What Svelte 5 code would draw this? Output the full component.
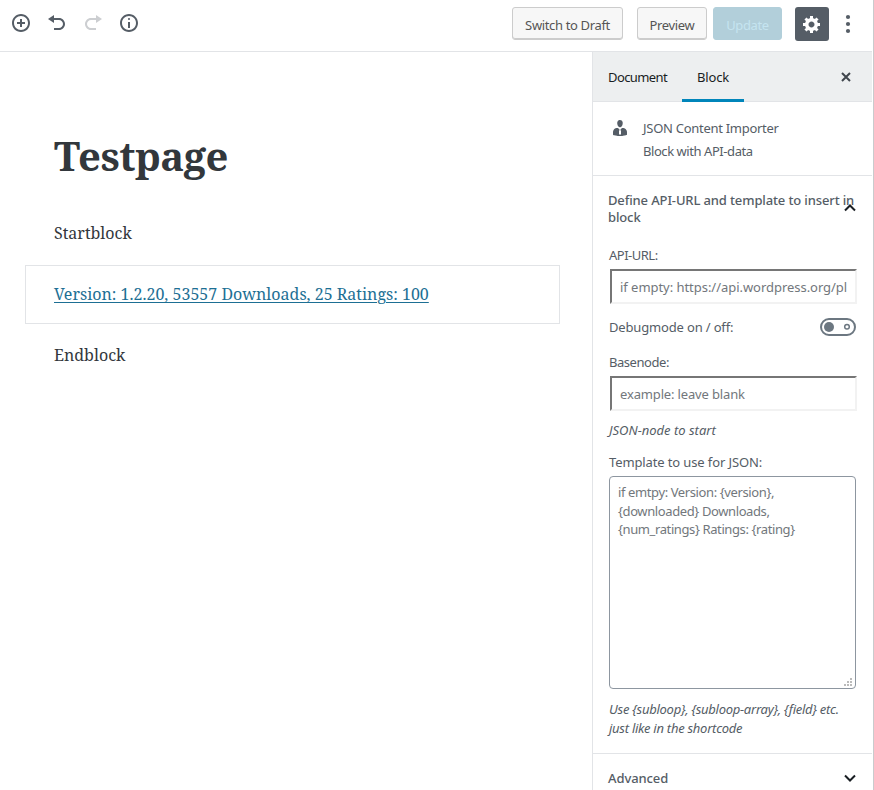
<script>
  let apiUrl = $state('');
  let baseNode = $state('');
  let template = $state('');
</script>

<div class="editor">
  <header>
    <div class="tools">
      <button class="tool" aria-label="Add block"><svg viewBox="0 0 20 20"><path d="M10 1c-5 0-9 4-9 9s4 9 9 9 9-4 9-9-4-9-9-9zm0 16c-3.9 0-7-3.1-7-7s3.1-7 7-7 7 3.1 7 7-3.1 7-7 7zM11 6H9v3H6v2h3v3h2v-3h3V9h-3V6z" /></svg></button>
      <button class="tool" aria-label="Undo"><svg viewBox="0 0 20 20"><path d="M12 5H7V2L1 6l6 4V7h5c2.2 0 4 1.8 4 4s-1.8 4-4 4H7v2h5c3.3 0 6-2.7 6-6s-2.7-6-6-6z" /></svg></button>
      <button class="tool dim" aria-label="Redo"><svg viewBox="0 0 20 20"><path d="M8 5h5V2l6 4-6 4V7H8c-2.2 0-4 1.8-4 4s1.8 4 4 4h5v2H8c-3.3 0-6-2.7-6-6s2.7-6 6-6z" /></svg></button>
      <button class="tool" aria-label="Content structure"><svg viewBox="0 0 20 20"><path d="M9 15h2V9H9v6zm1-10c-.5 0-1 .5-1 1s.5 1 1 1 1-.5 1-1-.5-1-1-1zm0-4c-5 0-9 4-9 9s4 9 9 9 9-4 9-9-4-9-9-9zm0 16c-3.9 0-7-3.1-7-7s3.1-7 7-7 7 3.1 7 7-3.1 7-7 7z" /></svg></button>
    </div>
    <div class="actions">
      <button class="btn draft">Switch to Draft</button>
      <button class="btn preview">Preview</button>
      <button class="btn update">Update</button>
      <button class="gear" aria-label="Settings"><svg viewBox="0 0 20 20"><path d="M18 12h-2.18c-.17.7-.44 1.35-.81 1.93l1.54 1.54-2.1 2.1-1.54-1.54c-.58.36-1.23.63-1.91.79V19H8v-2.18c-.68-.16-1.33-.43-1.91-.79l-1.54 1.54-2.12-2.12 1.54-1.54c-.36-.58-.63-1.23-.79-1.91H1V9.03h2.17c.16-.7.44-1.35.8-1.94L2.43 5.55l2.1-2.1 1.54 1.54c.58-.37 1.24-.64 1.93-.81V2h3v2.18c.68.16 1.33.43 1.91.79l1.54-1.54 2.12 2.12-1.54 1.54c.36.59.64 1.24.8 1.94H18V12zm-8.5 1.5c1.66 0 3-1.34 3-3s-1.34-3-3-3-3 1.34-3 3 1.34 3 3 3z" /></svg></button>
      <button class="more" aria-label="More"><svg viewBox="0 0 8 20"><circle cx="4" cy="3" r="2.1" /><circle cx="4" cy="10" r="2.1" /><circle cx="4" cy="17" r="2.1" /></svg></button>
    </div>
  </header>

  <div class="body">
    <main>
      <h1>Testpage</h1>
      <p class="start">Startblock</p>
      <div class="block"><a href="#top">Version: 1.2.20, 53557 Downloads, 25 Ratings: 100</a></div>
      <p class="end">Endblock</p>
    </main>

    <aside>
      <nav>
        <button class="tab doc">Document</button>
        <button class="tab active">Block</button>
        <button class="close" aria-label="Close"><svg viewBox="0 0 10 10"><path d="M1 1l8 8M9 1L1 9" /></svg></button>
      </nav>

      <section class="card">
        <svg viewBox="0 0 20 20"><path d="M7.3 6l-.03-.19c-.04-.37-.05-.73-.03-1.08.02-.36.1-.71.25-1.04.14-.32.31-.61.52-.86s.49-.46.83-.6c.34-.15.72-.23 1.13-.23.69 0 1.26.2 1.71.59s.76.87.91 1.44.18 1.16.09 1.78l-.03.19c-.01.09-.05.25-.11.48-.05.24-.12.47-.2.69-.08.21-.19.45-.34.72-.14.27-.3.49-.47.69-.18.19-.4.34-.67.48-.27.13-.55.19-.86.19s-.59-.06-.87-.19c-.26-.13-.49-.29-.67-.5-.18-.2-.34-.42-.49-.66-.15-.25-.26-.49-.34-.73-.09-.25-.16-.47-.21-.67-.06-.21-.1-.37-.12-.5zm9.2 6.24c.41.7.5 1.41.5 2.14v2.49c0 .03-.12.08-.29.13-.18.04-.42.13-.97.27-.55.12-1.1.24-1.65.34s-1.19.19-1.95.27c-.75.08-1.46.12-2.13.12-.68 0-1.39-.04-2.14-.12-.75-.07-1.4-.17-1.98-.27-.58-.11-1.08-.23-1.56-.34-.49-.11-.8-.21-1.06-.29L3 16.87v-2.49c0-.75.07-1.46.46-2.15s.81-1.25 1.5-1.68C5.66 10.12 7.19 10 8 10l1.67 1.67L9 13v3l1.02 1.08L11 16v-3l-.68-1.33L11.97 10c.77 0 2.2.07 2.9.52.71.45 1.21 1.02 1.63 1.72z" /></svg>
        <div>
          <div class="name">JSON Content Importer</div>
          <div class="desc">Block with API-data</div>
        </div>
      </section>

      <section class="panel">
        <h2>
          <span>Define API-URL and template to insert in<br />block</span>
          <svg class="chev up" viewBox="0 0 12 8"><path d="M1 6.5l5-5 5 5" /></svg>
        </h2>
        <label class="l-url" for="url">API-URL:</label>
        <input id="url" bind:value={apiUrl} placeholder="if empty: https://api.wordpress.org/plugins" />
        <div class="toggle-row">
          <span>Debugmode on / off:</span>
          <svg viewBox="0 0 36 18"><rect x="1" y="1" width="34" height="16" rx="8" /><circle class="knob" cx="9" cy="9" r="5" /><circle class="off" cx="27" cy="8.7" r="2.3" /></svg>
        </div>
        <label class="l-base" for="base">Basenode:</label>
        <input id="base" bind:value={baseNode} placeholder="example: leave blank" />
        <p class="help node">JSON-node to start</p>
        <label class="l-tpl" for="tpl">Template to use for JSON:</label>
        <div class="area">
          <textarea id="tpl" bind:value={template} placeholder={'if emtpy: Version: {version},\n{downloaded} Downloads,\n{num_ratings} Ratings: {rating}'}></textarea>
          <svg class="grip" viewBox="0 0 8 8"><path d="M6 0h2v2H6zM3 3h2v2H3zM6 3h2v2H6zM0 6h2v2H0zM3 6h2v2H3zM6 6h2v2H6z" /></svg>
        </div>
        <p class="help use">Use {'{subloop}'}, {'{subloop-array}'}, {'{field}'} etc.<br />just like in the shortcode</p>
      </section>

      <section class="advanced">
        <span>Advanced</span>
        <svg class="chev" viewBox="0 0 12 8"><path d="M1 1.5l5 5 5-5" /></svg>
      </section>
    </aside>
  </div>
</div>

<style>
  :global(body) { background: #fff; overflow: hidden; }
  .editor {
    box-sizing: border-box; width: 874px; height: 790px; overflow: hidden;
    display: flex; flex-direction: column; border-right: 1px solid #c9cbcd; padding-right: 1px;
    background: #fff; color: #555d66;
    font: 13px/18px "Noto Sans", sans-serif;
  }
  button { font: inherit; border: 0; background: none; padding: 0; margin: 0; color: inherit; }
  svg { display: block; flex: none; fill: currentColor; }
  header {
    box-sizing: border-box; flex: none; height: 52px; border-bottom: 1px solid #e2e4e7;
    display: flex; justify-content: space-between; align-items: flex-start;
  }
  .tools { display: flex; gap: 16px; padding: 13px 0 0 11px; }
  .tool svg { width: 20px; height: 20px; }
  .dim { color: #ccced1; }
  .actions { display: flex; padding: 7px 20px 0 0; }
  .btn {
    box-sizing: border-box; height: 33px; border: 1px solid #ccc; border-radius: 3px;
    background: #f7f7f7; box-shadow: inset 0 -1px 0 #ccc; color: #555; padding-top: 3px; white-space: nowrap;
    letter-spacing: -0.35px;
  }
  .draft { width: 111px; margin-right: 14px; }
  .preview { width: 70px; margin-right: 6px; }
  .update { width: 69px; border-color: #b2cfda; background: #b2cfda; box-shadow: none; color: #c5e4f0; margin-right: 13px; }
  .gear { width: 34px; height: 34px; border-radius: 3px; background: #555d66; color: #fff; display: grid; place-items: center; margin-right: 15px; }
  .gear svg { width: 20px; height: 20px; }
  .more { display: flex; padding-top: 7px; }
  .more svg { width: 8px; height: 20px; }

  .body { flex: 1; min-height: 0; display: flex; }
  main { flex: 1; padding: 77px 32px 0 25px; color: #32373c; font: 16px/28px "Noto Serif", "DejaVu Serif Condensed", "DejaVu Serif", serif; }
  h1 { margin: 0 0 0 29px; font-size: 40px; line-height: 54px; letter-spacing: -0.5px; }
  p { margin: 0; }
  .start { margin: 36px 0 18px 29px; }
  .block { box-sizing: border-box; height: 59px; border: 1px solid #e2e4e7; padding: 14px 28px; white-space: nowrap; }
  .block a { color: #1d6f94; text-underline-offset: 2px; text-decoration-thickness: 1px; }
  .end { margin: 17px 0 0 29px; }

  aside { box-sizing: border-box; width: 280px; flex: none; border-left: 1px solid #e2e4e7; }
  nav { box-sizing: border-box; height: 50px; background: #edeff0; border-bottom: 1px solid #e2e4e7; display: flex; color: #191e23; }
  .tab { box-sizing: border-box; height: 50px; border-bottom: 3px solid transparent; padding: 3px 15px 0; }
  .doc { width: 89px; letter-spacing: -0.6px; }
  .active { width: 62px; border-color: #0085ba; letter-spacing: -0.2px; }
  .close { margin: 0 21px 0 auto; color: #40464d; }
  .close svg { width: 10px; height: 10px; stroke: currentColor; stroke-width: 2; }
  .card { box-sizing: border-box; height: 74px; border-bottom: 1px solid #e2e4e7; display: flex; padding: 15px 17px; gap: 13px; }
  .card svg { width: 20px; height: 20px; margin-top: 1px; }
  .name { line-height: 22px; letter-spacing: -0.28px; }
  .desc { line-height: 24px; letter-spacing: -0.44px; }
  .panel { box-sizing: border-box; height: 578px; border-bottom: 1px solid #e2e4e7; padding: 16px 16px 0; }
  h2 { margin: 0 0 0 -1px; font-size: 13px; font-weight: 500; line-height: 17px; display: flex; justify-content: space-between; align-items: center; white-space: nowrap; height: 34px; letter-spacing: -0.13px; }
  h2 span { width: 236px; }
  .chev { width: 12px; height: 8px; fill: none; stroke: #191e23; stroke-width: 2; }
  .up { margin-top: -2px; }
  label { display: block; }
  .l-url { margin-top: 20px; letter-spacing: -0.5px; }
  input {
    box-sizing: border-box; display: block; width: 247px; height: 35px; margin: 5px 0 0 1px; padding: 1px 8px;
    border: 2px solid; border-color: #767676 #f2f2f2 #f2f2f2 #767676; border-radius: 0; background: #fff;
    font: 13px "Noto Sans", sans-serif; outline: 0; letter-spacing: -0.04px;
  }
  #base { letter-spacing: -0.15px; }
  ::placeholder { color: #72777c; opacity: 1; }
  .toggle-row { display: flex; justify-content: space-between; align-items: center; height: 18px; margin-top: 14px; letter-spacing: -0.16px; }
  .toggle-row svg { width: 36px; height: 18px; fill: none; stroke: #6c7781; stroke-width: 2; }
  .toggle-row .knob { fill: #6c7781; stroke: none; }
  .toggle-row .off { stroke-width: 1.5; }
  .l-base { margin-top: 17px; letter-spacing: -0.45px; }
  .help { font-style: italic; white-space: nowrap; }
  .node { margin-top: 10px; }
  .l-tpl { margin-top: 14px; letter-spacing: -0.12px; }
  .area { position: relative; width: 247px; height: 213px; margin-top: 5px; }
  textarea {
    box-sizing: border-box; display: block; width: 100%; height: 100%; resize: none; overflow: hidden;
    border: 1px solid #8d96a0; border-radius: 4px; padding: 6px 8px; background: #fff; outline: 0;
    font: 13px/18.6px "Noto Sans", sans-serif; letter-spacing: -0.39px;
  }
  .grip { position: absolute; right: 4px; bottom: 3px; width: 8px; height: 8px; fill: #bbb; }
  .use { margin-top: 11px; line-height: 19px; letter-spacing: -0.26px; }
  .advanced { display: flex; justify-content: space-between; align-items: center; height: 48px; padding: 0 16px 0 15px; font-weight: 500; letter-spacing: -0.1px; }
</style>
